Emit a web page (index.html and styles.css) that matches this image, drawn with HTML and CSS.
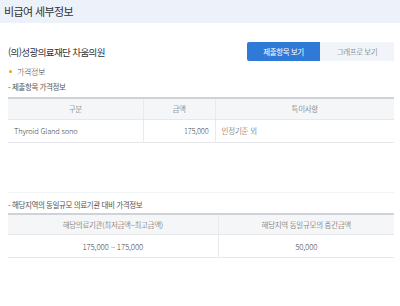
FILE: index.html
```html
<!DOCTYPE html>
<html lang="ko">
<head>
<meta charset="utf-8">
<link rel="stylesheet" href="styles.css">
</head>
<body>
<div class="topbar">비급여 세부정보</div>
<div class="content">
  <div class="hosp-row">
    <div class="hosp-name">(의)성광의료재단 차움의원</div>
    <div class="tabs">
      <div class="tab active">제출항목 보기</div>
      <div class="tab">그래프로 보기</div>
    </div>
  </div>
  <div class="bullet-title"><span class="dot"></span>가격정보</div>
  <div class="sub-title">- 제출항목 가격정보</div>
  <table class="tbl t1">
    <colgroup><col style="width:135px"><col style="width:72px"><col></colgroup>
    <thead><tr><th>구분</th><th>금액</th><th>특이사항</th></tr></thead>
    <tbody><tr><td class="left">Thyroid Gland sono</td><td class="right">175,000</td><td class="left">인정기준 외</td></tr></tbody>
  </table>
  <div class="divider"></div>
  <div class="sub-title s2">- 해당지역의 동일규모 의료기관 대비 가격정보</div>
  <table class="tbl t2">
    <colgroup><col style="width:210px"><col></colgroup>
    <thead><tr><th>해당의료기관(최저금액~최고금액)</th><th>해당지역 동일규모의 중간금액</th></tr></thead>
    <tbody><tr><td>175,000 ~ 175,000</td><td>50,000</td></tr></tbody>
  </table>
</div>
</body>
</html>
```
FILE: styles.css
```css
* { box-sizing: border-box; }
html, body { margin: 0; padding: 0; background: #fff; }
body {
  font-family: "Noto Sans CJK KR", "Noto Sans", sans-serif;
  color: #444;
  width: 400px;
  height: 306px;
  overflow: hidden;
}
.topbar {
  height: 23px;
  background: #edf2fa;
  font-size: 11px;
  line-height: 23px;
  padding-left: 4px;
  color: #333;
  letter-spacing: -0.6px;
}
.content { padding: 0 6px 0 8px; }
.hosp-row {
  display: flex;
  align-items: center;
  justify-content: space-between;
  margin-top: 19px;
  height: 19px;
}
.hosp-name {
  font-size: 9.5px;
  color: #333;
  letter-spacing: -0.6px;
}
.tabs { display: flex; }
.tab {
  width: 74px;
  height: 19px;
  line-height: 19px;
  text-align: center;
  font-size: 7.5px;
  background: #f1f4f8;
  color: #555;
  font-weight: 300;
  letter-spacing: -0.4px;
}
.tab.active {
  width: 73px;
  background: #2f7ad6;
  color: #fff;
  font-weight: 400;
  border-radius: 2px 0 0 2px;
}
.bullet-title {
  display: flex;
  align-items: center;
  margin-top: 2px;
  height: 16px;
  font-size: 8px;
  color: #444;
  font-weight: 300;
  letter-spacing: -0.4px;
}
.dot {
  width: 3px;
  height: 3px;
  border-radius: 50%;
  background: #f0a020;
  margin: 0 5px 0 1px;
}
.sub-title {
  height: 16px;
  line-height: 16px;
  font-size: 7.5px;
  color: #555;
  letter-spacing: -0.4px;
}
.tbl {
  width: 100%;
  border-collapse: collapse;
  font-size: 7.5px;
  color: #4a4a4a;
  font-weight: 300;
  border-top: 2px solid #cfd2d6;
  table-layout: fixed;
  margin-top: 2px;
}
.tbl th {
  background: #f5f6f8;
  font-weight: 300;
  height: 21px;
  text-align: center;
  color: #4a4a4a;
  border-bottom: 1px solid #e6e8eb;
  letter-spacing: -0.3px;
}
.tbl td {
  height: 23px;
  text-align: center;
  border-bottom: 1px solid #e6e8eb;
  letter-spacing: -0.2px;
}
.tbl th + th, .tbl td + td { border-left: 1px solid #e8eaed; }
.tbl td.left { text-align: left; padding-left: 6px; }
.tbl td.right { text-align: right; padding-right: 6px; }
.t2 td { font-size: 8px; }
.divider {
  margin-top: 49px;
  height: 1px;
  background: #f2f3f5;
}
.sub-title.s2 { margin-top: 4px; }
.t2 { margin-top: 0; }
```
